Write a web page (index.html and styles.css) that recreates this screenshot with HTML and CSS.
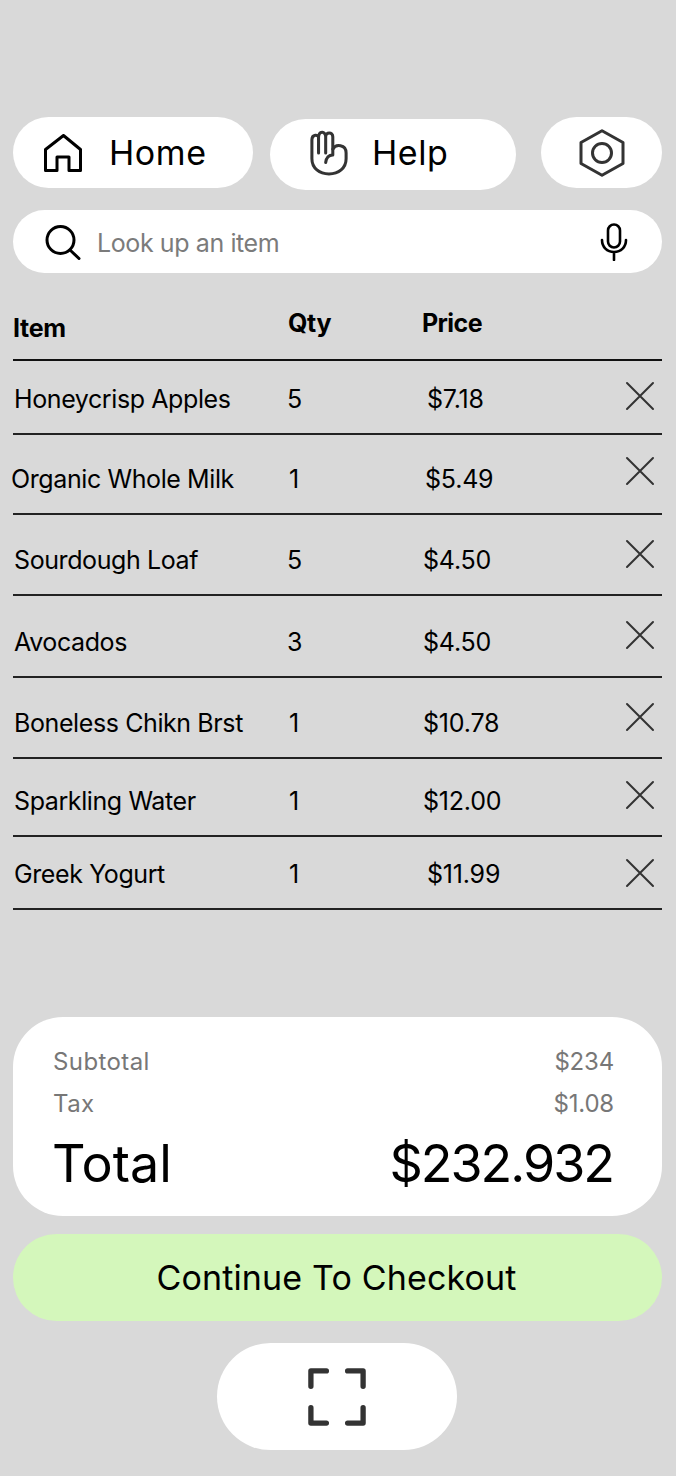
FILE: index.html
```html
<!DOCTYPE html>
<html lang="en">
<head>
    <meta charset="UTF-8">
    <meta name="viewport" content="width=device-width, initial-scale=1.0">
    <title>Cart</title>
    <link rel="stylesheet" href="styles.css">
</head>
<body>
    <div class="container">
        <nav class="top-nav">
            <a class="pill home-pill">
                <svg class="home-icon" viewBox="0 0 38 38" fill="none" stroke="#000" stroke-width="3" stroke-linejoin="round">
                    <path d="M1.5 36.5V15.5L19.5 1.5L36.5 15.5V36.5H25V23H13V36.5Z"/>
                </svg>
                <span>Home</span>
            </a>
            <a class="pill help-pill">
                <svg class="help-icon" viewBox="0 0 40 48" fill="none" stroke="#333" stroke-width="3.2" stroke-linecap="round" stroke-linejoin="round">
                    <path d="M9 24V8C9 4 2 4 2 10V30C2 40 10 46 20 46C30 46 38 40 38 30V24C38 15 27 14 24 20"/>
                    <path d="M9 8C9 0.5 16.5 0.5 16.500 7V24M16.500 7C16.500 1.500 24 1.500 24 7V26C19 26 17 30 16.500 34"/>
                </svg>
                <span>Help</span>
            </a>
            <a class="pill settings-pill">
                <svg class="settings-icon" viewBox="0 0 46 48" fill="none" stroke="#333" stroke-width="3">
                    <path d="M23 1.700L44 13.500V34.500L23 46.300L2 34.500V13.500Z" stroke-linejoin="round"/>
                    <circle cx="23" cy="24" r="9.500"/>
                </svg>
            </a>
        </nav>

        <div class="search-bar">
            <svg class="search-icon" viewBox="0 0 36 36" fill="none" stroke="#000" stroke-width="3" stroke-linecap="round">
                <circle cx="15.500" cy="15" r="13.500"/>
                <path d="M25 25L34 33.500"/>
            </svg>
            <span class="search-text">Look up an item</span>
            <svg class="mic-icon" viewBox="0 0 28 38" fill="none" stroke="#000" stroke-width="2.600" stroke-linecap="round">
                <rect x="8" y="1.500" width="12" height="23" rx="6"/>
                <path d="M2 17C2 24 7 29 14 29S26 24 26 17M14 29V37"/>
            </svg>
        </div>

        <div class="cart-table">
            <div class="table-head">
                <span class="head-item">Item</span>
                <span class="head-qty">Qty</span>
                <span class="head-price">Price</span>
            </div>
            <div class="row row-a">
                <span class="name">Honeycrisp Apples</span>
                <span class="qty qty-wide">5</span>
                <span class="price p-far">$7.18</span>
                <svg class="remove" viewBox="0 0 30 30"><path d="M2 2L28 28M28 2L2 28"/></svg>
            </div>
            <div class="row row-b">
                <span class="name name-out">Organic Whole Milk</span>
                <span class="qty">1</span>
                <span class="price p-mid">$5.49</span>
                <svg class="remove" viewBox="0 0 30 30"><path d="M2 2L28 28M28 2L2 28"/></svg>
            </div>
            <div class="row row-c">
                <span class="name">Sourdough Loaf</span>
                <span class="qty qty-wide">5</span>
                <span class="price">$4.50</span>
                <svg class="remove" viewBox="0 0 30 30"><path d="M2 2L28 28M28 2L2 28"/></svg>
            </div>
            <div class="row row-f">
                <span class="name">Avocados</span>
                <span class="qty qty-wide">3</span>
                <span class="price">$4.50</span>
                <svg class="remove" viewBox="0 0 30 30"><path d="M2 2L28 28M28 2L2 28"/></svg>
            </div>
            <div class="row row-c">
                <span class="name">Boneless Chikn Brst</span>
                <span class="qty">1</span>
                <span class="price">$10.78</span>
                <svg class="remove" viewBox="0 0 30 30"><path d="M2 2L28 28M28 2L2 28"/></svg>
            </div>
            <div class="row row-d">
                <span class="name">Sparkling Water</span>
                <span class="qty">1</span>
                <span class="price">$12.00</span>
                <svg class="remove" viewBox="0 0 30 30"><path d="M2 2L28 28M28 2L2 28"/></svg>
            </div>
            <div class="row row-e">
                <span class="name">Greek Yogurt</span>
                <span class="qty">1</span>
                <span class="price p-far">$11.99</span>
                <svg class="remove" viewBox="0 0 30 30"><path d="M2 2L28 28M28 2L2 28"/></svg>
            </div>
        </div>

        <div class="summary">
            <div class="summary-line"><span>Subtotal</span><span class="amount">$234</span></div>
            <div class="summary-line"><span>Tax</span><span class="amount">$1.08</span></div>
            <div class="summary-total"><span>Total</span><span class="total-amount">$232.932</span></div>
        </div>

        <button class="checkout-btn">Continue To Checkout</button>

        <button class="scan-btn">
            <svg class="scan-icon" viewBox="0 0 60 60" fill="none" stroke="#333" stroke-width="5.500" stroke-linecap="round" stroke-linejoin="round">
                <path d="M3 19V3H19M41 3H57V19M57 41V57H41M19 57H3V41"/>
            </svg>
        </button>
    </div>
</body>
</html>
```

FILE: styles.css
```css
body {
    margin: 0;
    padding: 0;
    font-family: Inter, "Noto Sans", sans-serif;
    background: #d9d9d9;
    color: #000;
}

.container {
    width: 676px;
    height: 1476px;
    box-sizing: border-box;
    padding: 117px 14px 0 13px;
    overflow: hidden;
}

/* top buttons */
.top-nav {
    display: flex;
    align-items: flex-start;
    height: 73px;
}

.pill {
    display: flex;
    align-items: center;
    height: 71px;
    background: #fff;
    border-radius: 36px;
    box-sizing: border-box;
    font-size: 34px;
    letter-spacing: 0.6px;
}

.home-pill {
    width: 240px;
    padding-left: 31px;
    gap: 27px;
}

.help-pill {
    width: 246px;
    margin: 2px 0 0 17px;
    padding: 0 0 4px 40px;
    gap: 24px;
}

.settings-pill {
    width: 121px;
    margin-left: 25px;
    justify-content: center;
}

.home-icon { width: 38px; height: 38px; }
.help-icon { width: 38px; height: 46px; }
.settings-icon { width: 46px; height: 48px; }

/* search */
.search-bar {
    display: flex;
    align-items: center;
    height: 63px;
    margin-top: 20px;
    padding: 0 34px 0 32px;
    background: #fff;
    border-radius: 32px;
}

.search-icon { width: 36px; height: 36px; margin-top: 2px; }
.mic-icon { width: 28px; height: 38px; }

.search-text {
    flex: 1;
    margin: 2px 0 0 16px;
    font-size: 25px;
    letter-spacing: -0.4px;
    color: #7b7b7b;
}

/* item table */
.table-head {
    position: relative;
    height: 86px;
    border-bottom: 2px solid #111;
    font-weight: 700;
    font-size: 25px;
    letter-spacing: -0.3px;
}

.head-item { position: absolute; left: 0; top: 40px; }
.head-qty { position: absolute; left: 275px; top: 35px; }
.head-price { position: absolute; left: 409px; top: 35px; letter-spacing: -0.6px; }

.row {
    display: grid;
    grid-template-columns: 275px 135px 1fr 30px;
    align-items: center;
    border-bottom: 2px solid #222;
    box-sizing: border-box;
    font-size: 25px;
    padding-right: 7px;
}

.row-a { height: 74px; }
.row-b { height: 80px; }
.row-c { height: 81px; }
.row-f { height: 82px; }
.row-d { height: 78px; }
.row-e { height: 73px; }

/* each row's text sits a bit low, the x's don't */
.row span { letter-spacing: -0.4px; }
.row-a span { padding-top: 4px; }
.row-b span { padding-top: 9px; }
.row-c span { padding-top: 10px; }
.row-f span { padding-top: 11px; }
.row-d span { padding-top: 8px; }
.row-e span { padding-top: 2px; }

.row .price { letter-spacing: -0.2px; }

.name { padding-left: 1px; white-space: nowrap; }
.name-out { margin-left: -3px; }
.qty { padding-left: 1px; }
.qty-wide { margin-left: -2px; }
.p-mid { padding-left: 2px; }
.p-far { padding-left: 4px; }

.remove {
    width: 30px;
    height: 30px;
    fill: none;
    stroke: #333;
    stroke-width: 2;
    stroke-linecap: round;
    margin-top: -2px;
}

.row-b .remove { margin-top: -7px; }
.row-d .remove { margin-top: -4px; }
.row-e .remove { margin-top: 0; }

/* totals */
.summary {
    margin-top: 107px;
    height: 199px;
    box-sizing: border-box;
    padding: 23px 48px 0 40px;
    background: #fff;
    border-radius: 50px;
}

.summary-line {
    display: flex;
    justify-content: space-between;
    height: 42px;
    align-items: center;
    font-size: 24px;
    letter-spacing: 0.4px;
    color: #777;
}

.amount { letter-spacing: -0.2px; }

.summary-total {
    display: flex;
    justify-content: space-between;
    margin: 5px 0 0 -1px;
    font-size: 52px;
    line-height: 70px;
}

.total-amount { letter-spacing: -2px; margin-right: 1px; }

.checkout-btn {
    display: block;
    width: 100%;
    height: 87px;
    margin-top: 18px;
    padding: 0 2px 0 0;
    border: none;
    border-radius: 44px;
    background: #d4f7bb;
    font-family: inherit;
    font-size: 34px;
    letter-spacing: 0.15px;
    color: #000;
    cursor: pointer;
}

.scan-btn {
    display: flex;
    align-items: center;
    justify-content: center;
    width: 240px;
    height: 107px;
    margin: 22px 0 0 204px;
    border: none;
    border-radius: 54px;
    background: #fff;
    cursor: pointer;
}

.scan-icon { width: 58px; height: 58px; }
```
